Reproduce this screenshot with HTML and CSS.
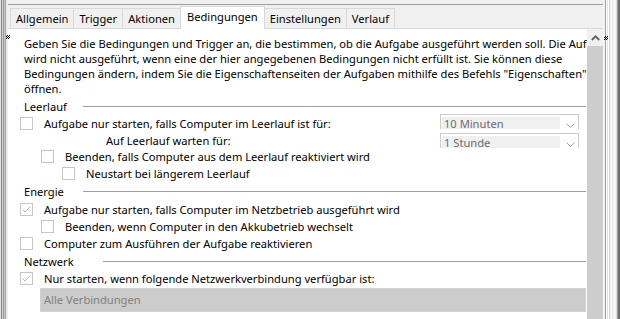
FILE: index.html
```html
<!DOCTYPE html>
<html lang="de">
<head>
<meta charset="utf-8">
<title>Bedingungen</title>
<link rel="stylesheet" href="styles.css">
</head>
<body>
<div class="window">
  <div class="frame-left"></div>
  <div class="main">
    <div class="top-edge"></div>
    <div class="tabs">
      <div class="tab">Allgemein</div>
      <div class="tab">Trigger</div>
      <div class="tab">Aktionen</div>
      <div class="tab active">Bedingungen</div>
      <div class="tab">Einstellungen</div>
      <div class="tab">Verlauf</div>
    </div>
    <div class="panel">
      <div class="content">
        <p class="intro">Geben Sie die Bedingungen und Trigger an, die bestimmen, ob die Aufgabe ausgeführt werden soll. Die Aufgabe<br>wird nicht ausgeführt, wenn eine der hier angegebenen Bedingungen nicht erfüllt ist. Sie können diese<br>Bedingungen ändern, indem Sie die Eigenschaftenseiten der Aufgaben mithilfe des Befehls "Eigenschaften"<br>öffnen.</p>

        <div class="group-head gap-2"><span class="group-label">Leerlauf</span><span class="rule"></span></div>
        <div class="row lvl0">
          <span class="cb"></span><span class="label">Aufgabe nur starten, falls Computer im Leerlauf ist für:</span>
          <div class="combo combo-up"><span class="combo-value">10 Minuten</span><svg class="chev" width="9" height="5" viewBox="0 0 9 5"><polyline points="0.5,0.5 4.5,4.5 8.5,0.5" fill="none" stroke="#a6a6a6" stroke-width="1"/></svg></div>
        </div>
        <div class="row short wait">
          <span class="label">Auf Leerlauf warten für:</span>
          <div class="combo combo-down"><span class="combo-value">1 Stunde</span><svg class="chev" width="9" height="5" viewBox="0 0 9 5"><polyline points="0.5,0.5 4.5,4.5 8.5,0.5" fill="none" stroke="#a6a6a6" stroke-width="1"/></svg></div>
        </div>
        <div class="row lvl1"><span class="cb"></span><span class="label">Beenden, falls Computer aus dem Leerlauf reaktiviert wird</span></div>
        <div class="row lvl2"><span class="cb"></span><span class="label">Neustart bei längerem Leerlauf</span></div>

        <div class="group-head gap-1"><span class="group-label">Energie</span><span class="rule"></span></div>
        <div class="row lvl0 gap-1"><span class="cb"><svg width="11" height="11" viewBox="0 0 11 11"><polyline points="1.5,5.5 4,8 9.5,2.5" fill="none" stroke="#b9b9b9" stroke-width="1"/></svg></span><span class="label">Aufgabe nur starten, falls Computer im Netzbetrieb ausgeführt wird</span></div>
        <div class="row lvl1"><span class="cb"></span><span class="label">Beenden, wenn Computer in den Akkubetrieb wechselt</span></div>
        <div class="row lvl0 short"><span class="cb"></span><span class="label">Computer zum Ausführen der Aufgabe reaktivieren</span></div>

        <div class="group-head gap-2"><span class="group-label wide">Netzwerk</span><span class="rule"></span></div>
        <div class="row lvl0"><span class="cb"><svg width="11" height="11" viewBox="0 0 11 11"><polyline points="1.5,5.5 4,8 9.5,2.5" fill="none" stroke="#b9b9b9" stroke-width="1"/></svg></span><span class="label">Nur starten, wenn folgende Netzwerkverbindung verfügbar ist:</span></div>
        <div class="net-combo">Alle Verbindungen</div>
      </div>
      <div class="scrollbar">
        <div class="sb-up"><svg width="9" height="6" viewBox="0 0 9 6"><polyline points="0.8,5 4.5,1.3 8.2,5" fill="none" stroke="#606060" stroke-width="1.8"/></svg></div>
        <div class="sb-thumb"></div>
      </div>
    </div>
  </div>
  <div class="frame-right"></div>
  <span class="grip grip-left"></span>
  <span class="grip grip-right"></span>
</div>
</body>
</html>
```

FILE: styles.css
```css
* { box-sizing: border-box; }

html, body {
  margin: 0;
  padding: 0;
}

body {
  width: 620px;
  height: 319px;
  overflow: hidden;
  background: #f0f0f0;
  font-family: "Noto Sans", "Open Sans", sans-serif;
  font-size: 11.15px;
  color: #000;
}

.window {
  position: relative;
  display: flex;
  width: 620px;
  height: 319px;
}

.frame-left {
  width: 8px;
  flex: none;
  background: linear-gradient(to right,
    #e3e3e3 0 1px, #8c8c8c 1px 2px, #d0d0d0 2px 3px, #9a9a9a 3px 4px,
    #c8c8c8 4px 5px, #a8a8a8 5px 6px, #e8e8e8 6px 7px, #f0f0f0 7px 8px);
}

.main {
  flex: 1;
  min-width: 0;
  display: flex;
  flex-direction: column;
}

.top-edge {
  height: 5px;
  flex: none;
  border-bottom: 1px solid #a0a0a0;
}

.tabs {
  height: 23px;
  flex: none;
  display: flex;
  align-items: flex-end;
  padding-left: 2px;
}

.tab {
  height: 20px;
  padding: 0 5px;
  border: 1px solid #d9d9d9;
  border-bottom: none;
  margin-right: -1px;
  background: #f0f0f0;
  line-height: 19px;
  white-space: nowrap;
}

.tab.active {
  position: relative;
  z-index: 1;
  height: 23px;
  margin-bottom: -1px;
  background: #fff;
  line-height: 20px;
  padding: 0 6px;
}

.panel {
  flex: 1;
  min-height: 0;
  display: flex;
  border-top: 1px solid #d9d9d9;
}

.content {
  flex: 1;
  min-width: 0;
  background: #fff;
  overflow: hidden;
}

.intro {
  margin: 0;
  padding: 7px 0 0 16px;
  line-height: 15px;
  white-space: nowrap;
}

.group-head {
  display: flex;
  align-items: center;
  height: 17px;
  padding-left: 16px;
  white-space: nowrap;
}

.group-label {
  min-width: 59px;
}

.group-label.wide {
  min-width: 79px;
}

.rule {
  flex: 1;
  height: 1px;
  background: #a0a0a0;
  margin-right: 1px;
}

.gap-1 { margin-top: 1px; }
.gap-2 { margin-top: 2px; }

.row {
  display: flex;
  align-items: center;
  height: 17px;
  white-space: nowrap;
}

.row.short { height: 16px; }

.lvl0 { padding-left: 12px; }
.lvl1 { padding-left: 33px; }
.lvl2 { padding-left: 54px; }
.wait { padding-left: 98px; overflow: hidden; }

.cb {
  flex: none;
  width: 13px;
  height: 13px;
  border: 1px solid #c6c6c6;
  background: #fff;
  margin-right: 11px;
  display: flex;
}

.combo {
  align-self: flex-start;
  margin-left: auto;
  margin-right: 8px;
  width: 139px;
  height: 15px;
  border: 1px solid #cccccc;
  border-bottom: none;
  background: #fff;
  display: flex;
  align-items: flex-start;
  padding: 2px 0 0 1px;
  overflow: hidden;
}

.combo-up { margin-top: -1px; }
.combo-down { margin-top: 1px; }

.combo-value {
  width: 118px;
  height: 12px;
  padding-left: 2px;
  background: #f0f0f0;
  color: #6d6d6d;
  line-height: 13px;
}

.chev {
  margin-left: auto;
  margin-right: 3px;
  margin-top: 6px;
}

.net-combo {
  margin: 1px 1px 0 32px;
  height: 24px;
  border: 1px solid #d2d2d2;
  background: #cccccc;
  color: #808080;
  padding-left: 3px;
  line-height: 22px;
}

.scrollbar {
  width: 16px;
  flex: none;
  display: flex;
  flex-direction: column;
  background: #cdcdcd;
}

.sb-up {
  height: 17px;
  background: #f0f0f0;
  display: flex;
  justify-content: center;
  padding-top: 6px;
}

.sb-thumb {
  flex: 1;
  background: #cdcdcd;
}

.frame-right {
  width: 17px;
  flex: none;
  background: linear-gradient(to right,
    #f5f5f5 0 1px, #f0f0f0 1px 2px, #a0a0a0 2px 3px, #ffffff 3px 4px,
    #e3e3e3 4px 5px, #ffffff 5px 6px, #d5d5d5 6px 7px, #f0f0f0 7px 8px,
    #ffffff 8px 9px, #e3e3e3 9px 10px, #f0f0f0 10px 11px, #ffffff 11px 12px,
    #f0f0f0 12px 13px, #d9d9d9 13px 14px, #a0a0a0 14px 15px, #6b6b6b 15px 17px);
}

.grip {
  position: absolute;
  width: 4px;
  height: 4px;
  background: repeating-conic-gradient(#000 0 25%, transparent 0 50%) 0 0 / 2px 2px;
}

.grip-left { left: 6px; top: 35px; }
.grip-right { left: 604px; top: 36px; }
```
